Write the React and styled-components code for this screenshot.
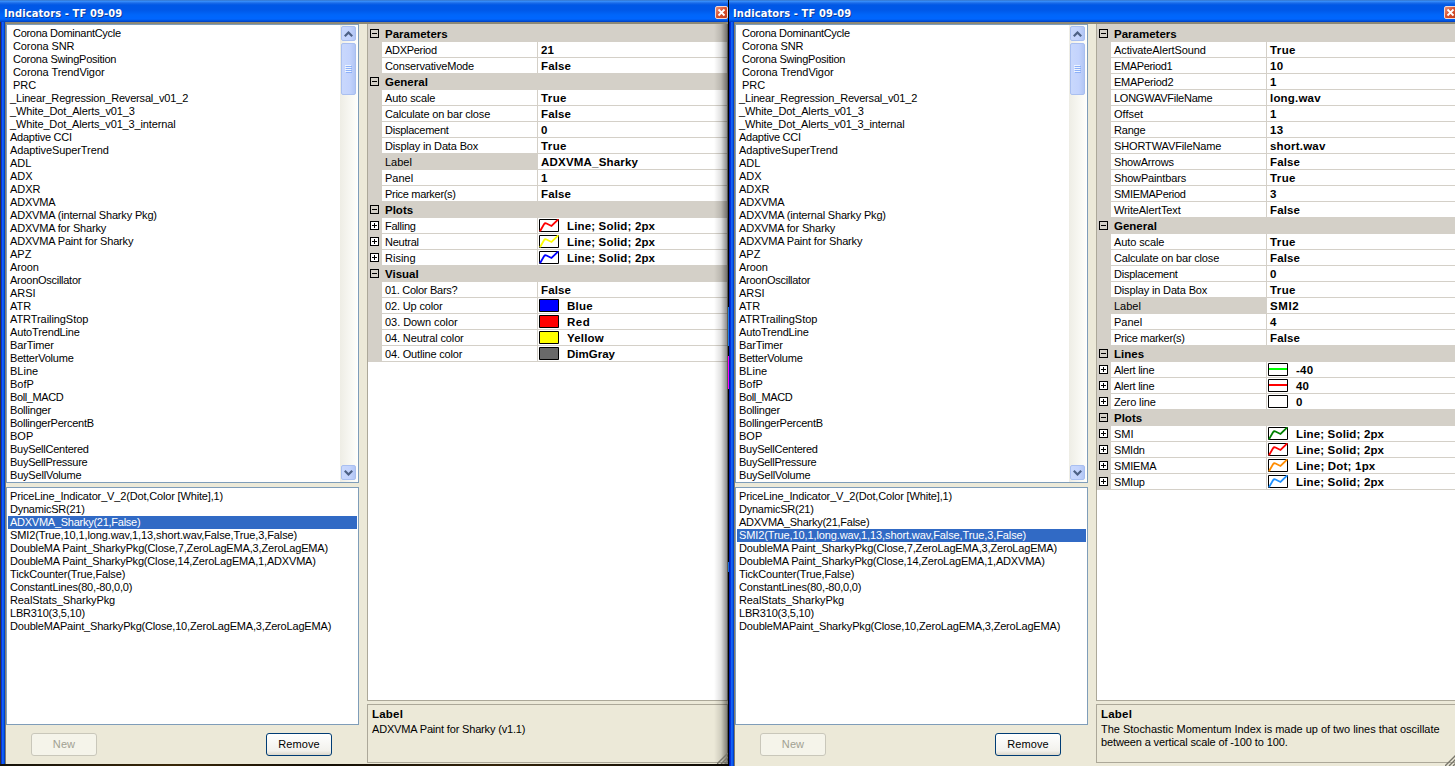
import React from 'react';
import styled, { createGlobalStyle } from 'styled-components';

const Global = createGlobalStyle`
  * { box-sizing: border-box; }
  html, body, #root { margin: 0; width: 1455px; height: 766px; overflow: hidden; }
  body { background: #0c0b08; font: 11px/13px "Liberation Sans", Arial, sans-serif; color: #000; }
`;

const Desktop = styled.div`
  display: flex;
  width: 1455px;
  height: 766px;
  background: linear-gradient(90deg, #14120a, #3a2808 12%, #120d04 22%, #33240a 34%, #0d0a05 50%, #000);
`;
const Window = styled.section`
  display: flex;
  flex-direction: column;
  flex: none;
  position: relative;
  width: ${p => p.$width}px;
  height: ${p => p.$height}px;
  overflow: hidden;
`;
const Gap = styled.div`
  width: 1px;
  height: 766px;
  flex: none;
  background: linear-gradient(#000 0 307px, #1c7fe8 307px 346px, #000 346px 356px, #ff00ff 356px 389px, #000 389px 562px, #1c6fd8 562px 572px, #000 572px);
`;
const TitleBar = styled.header`
  display: flex;
  align-items: center;
  height: 22px;
  flex: none;
  padding: 4px 0 0 4px;
  background: linear-gradient(#3168b4 0, #3d95ff 1px, #1b6be8 3px, #0058e6 5px, #0058e8 10px, #0066fa 15px, #0066ff 19px, #0050d8 21px, #003bc0 22px);
  color: #fff;
  font: bold 11px/14px "DejaVu Sans Condensed", "DejaVu Sans", sans-serif;
  text-shadow: 1px 1px 0 #0a3a9c;
  white-space: nowrap;
`;
const TitleText = styled.h1`
  margin: 0;
  padding-top: 1px;
  font: inherit;
  flex: 1;
  letter-spacing: 0.12px;
`;
const CloseButton = styled.button`
  display: flex;
  align-items: center;
  justify-content: center;
  flex: none;
  width: 13px;
  height: 13px;
  padding: 0;
  margin: -2px ${p => p.$right}px 0 0;
  border: 1px solid #f4d8d0;
  border-radius: 2px;
  background: linear-gradient(135deg, #e8907a, #d8502c 50%, #c03c1c);
`;
const Body = styled.div`
  display: flex;
  flex: 1;
  min-height: 0;
  border-top: 2px solid #8c8877;
  background: #ece9d8;
`;
const Frame = styled.div`
  flex: none;
  width: 6px;
  margin-top: -2px;
  background: linear-gradient(90deg, ${p => p.$edge} 0 1px, #0831d9 1px 2px, #1462f5 2px 3px, #0a5cf0 3px 4px, #0040c8 4px 5px, #807c6c 5px 6px);
`;
const LeftColumn = styled.div`
  display: flex;
  flex-direction: column;
  width: 353px;
  flex: none;
`;
const ListBox = styled.div`
  display: flex;
  height: ${p => p.$height}px;
  margin-bottom: ${p => p.$gap || 0}px;
  padding-right: 1px;
  border: 1px solid #7f9db9;
  background: #fff;
  flex: none;
`;
const Items = styled.ul`
  flex: 1;
  margin: 0;
  padding: 2px 0 0 1px;
  list-style: none;
`;
const Item = styled.li`
  height: 13px;
  padding-left: ${p => (p.$indent ? 5 : 2)}px;
  white-space: pre;
  background: ${p => (p.$selected ? '#316ac5' : 'transparent')};
  color: ${p => (p.$selected ? '#fff' : '#000')};
`;
const Spaced = styled.span`
  letter-spacing: ${p => p.$ls}px;
`;
const Scrollbar = styled.div`
  display: flex;
  flex-direction: column;
  width: 17px;
  flex: none;
  padding: 0 0 1px;
  background: linear-gradient(90deg, #eeede5, #fefefb);
`;
const ScrollPart = styled.div`
  display: flex;
  align-items: center;
  justify-content: center;
  width: 15px;
  height: ${p => p.$height}px;
  margin: 1px;
  border: 1px solid #a9bff0;
  border-radius: 2px;
  background: linear-gradient(90deg, #c9d8fc, #c3d3fd 60%, #b2c6f4);
`;
const Track = styled.div`
  flex: 1;
`;
const Buttons = styled.div`
  display: flex;
  justify-content: space-between;
  padding: 8px 27px 0 25px;
`;
const Button = styled.button`
  width: 66px;
  height: 23px;
  padding: 0;
  border: 1px solid ${p => (p.disabled ? '#c9c7ba' : '#003c74')};
  border-radius: 3px;
  background: ${p => (p.disabled ? '#f5f4ea' : 'linear-gradient(#fff, #f2f1ec 80%, #dcd8cc)')};
  color: ${p => (p.disabled ? '#a1a192' : '#000')};
  font: 11px/13px "Liberation Sans", sans-serif;
  letter-spacing: 0.1px;
`;
const RightColumn = styled.div`
  display: flex;
  flex-direction: column;
  flex: 1;
  min-width: 0;
  margin: 0 ${p => p.$overflow}px 0 8px;
`;
const Grid = styled.div`
  height: 677px;
  flex: none;
  padding-top: 2px;
  border: 1px solid #aca899;
  border-top: 0;
  background: linear-gradient(#d4d0c8 0 2px, #fff 2px);
`;
const Group = styled.div`
  display: grid;
  grid-template-columns: 14px 1fr;
  height: 16px;
  background: #d4d0c8;
  font-weight: bold;
  font-size: 11.5px;
  line-height: 16px;
  span { padding-left: 3px; }
`;
const Row = styled.div`
  display: grid;
  grid-template-columns: 14px 155px 1fr;
  height: 16px;
  background: #d4d0c8;
`;
const Expander = styled.svg`
  display: block;
  width: 9px;
  height: 9px;
  margin: 3px 0 0 2px;
`;
const Name = styled.div`
  height: 15px;
  padding: 2px 0 0 3px;
  background: ${p => (p.$selected ? '#d4d0c8' : '#fff')};
  white-space: nowrap;
`;
const Value = styled.div`
  display: flex;
  height: 15px;
  margin-left: 1px;
  padding: 2px 0 0 3px;
  background: #fff;
  font-weight: bold;
  font-size: 11.5px;
  white-space: nowrap;
`;
const Preview = styled.svg`
  display: block;
  width: 20px;
  height: 13px;
  flex: none;
  margin: -1px 8px 0 -2px;
`;
const Help = styled.div`
  height: 59px;
  flex: none;
  margin-top: 3px;
  padding: 3px 4px 0;
  border: 1px solid #aca899;
`;
const HelpTitle = styled.div`
  margin-bottom: 2px;
  font-weight: bold;
  font-size: 11.5px;
  letter-spacing: 0.2px;
`;
const HelpLine = styled.div`
  height: 13px;
  white-space: nowrap;
`;
const EdgeShadow = styled.div`
  position: absolute;
  right: 0;
  top: 24px;
  bottom: 0;
  width: 14px;
  background: linear-gradient(90deg, rgba(0,0,0,0), rgba(0,0,0,.12) 50%, rgba(0,0,0,.5));
`;
const Grip = styled.svg`
  position: absolute;
  right: ${p => p.$right}px;
  bottom: 0;
`;

const tracking = {
  'Corona DominantCycle': -0.3, 'Corona SNR': -0.1, 'Corona SwingPosition': -0.25, 'Corona TrendVigor': -0.07,
  _Linear_Regression_Reversal_v01_2: -0.18, _White_Dot_Alerts_v01_3: -0.13, _White_Dot_Alerts_v01_3_internal: -0.14,
  'Adaptive CCI': -0.25, AdaptiveSuperTrend: -0.1, 'ADXVMA (internal Sharky Pkg)': -0.17,
  'ADXVMA for Sharky': -0.17, 'ADXVMA Paint for Sharky': -0.17, ADXVMA: -0.15, Aroon: -0.15, AroonOscillator: -0.27,
  ATRTrailingStop: -0.07, AutoTrendLine: -0.15, BarTimer: -0.12, BetterVolume: -0.2, Boll_MACD: -0.4,
  Bollinger: -0.2, BollingerPercentB: -0.25, BuySellCentered: -0.26, BuySellPressure: -0.26, BuySellVolume: -0.2,
  'PriceLine_Indicator_V_2(Dot,Color [White],1)': -0.16, 'DynamicSR(21)': -0.23, 'ADXVMA_Sharky(21,False)': -0.26,
  'SMI2(True,10,1,long.wav,1,13,short.wav,False,True,3,False)': -0.11,
  'DoubleMA Paint_SharkyPkg(Close,7,ZeroLagEMA,3,ZeroLagEMA)': -0.17,
  'DoubleMA Paint_SharkyPkg(Close,14,ZeroLagEMA,1,ADXVMA)': -0.18, 'TickCounter(True,False)': -0.14,
  'ConstantLines(80,-80,0,0)': -0.2, RealStats_SharkyPkg: -0.1, 'LBR310(3,5,10)': -0.2,
  'DoubleMAPaint_SharkyPkg(Close,10,ZeroLagEMA,3,ZeroLagEMA)': -0.18,
  ADXPeriod: -0.3, ConservativeMode: -0.17, 'Auto scale': -0.1, 'Calculate on bar close': -0.17,
  Displacement: -0.25, 'Display in Data Box': -0.15, 'Price marker(s)': -0.3, Falling: -0.25, Neutral: -0.25,
  '01. Color Bars?': -0.27, '02. Up color': -0.15, '03. Down color': -0.05, '04. Neutral color': -0.12,
  '04. Outline color': -0.17, ActivateAlertSound: -0.1, EMAPeriod1: -0.35, EMAPeriod2: -0.25,
  LONGWAVFileName: -0.25, Range: -0.2, SHORTWAVFileName: -0.12, ShowArrows: -0.2, ShowPaintbars: -0.15,
  SMIEMAPeriod: -0.3, WriteAlertText: -0.12, 'Alert line': -0.25, 'Zero line': -0.12, SMIdn: -0.2,
  SMIEMA: -0.15, SMIup: -0.2,
  False: 0.15, True: 0.4, ADXVMA_Sharky: 0.2, 'Line; Solid; 2px': 0.16, 'Line; Dot; 1px': 0.2, Blue: 0.25,
  Red: 0.5, Yellow: 0.2, 'long.wav': 0.2, 'short.wav': 0.2, SMI2: 0.6, '-40': 0.2, 40: 0.2, 10: 0.3, 13: 0.3,
  'ADXVMA Paint for Sharky (v1.1)': -0.17,
  'The Stochastic Momentum Index is made up of two lines that oscillate': -0.02,
  'between a vertical scale of -100 to 100.': -0.12,
};
const Label = ({ children }) => <Spaced $ls={tracking[children] || 0}>{children}</Spaced>;

const indicators = ['Corona DominantCycle', 'Corona SNR', 'Corona SwingPosition', 'Corona TrendVigor', 'PRC',
  '_Linear_Regression_Reversal_v01_2', '_White_Dot_Alerts_v01_3', '_White_Dot_Alerts_v01_3_internal',
  'Adaptive CCI', 'AdaptiveSuperTrend', 'ADL', 'ADX', 'ADXR', 'ADXVMA', 'ADXVMA (internal Sharky Pkg)',
  'ADXVMA for Sharky', 'ADXVMA Paint for Sharky', 'APZ', 'Aroon', 'AroonOscillator', 'ARSI', 'ATR',
  'ATRTrailingStop', 'AutoTrendLine', 'BarTimer', 'BetterVolume', 'BLine', 'BofP', 'Boll_MACD', 'Bollinger',
  'BollingerPercentB', 'BOP', 'BuySellCentered', 'BuySellPressure', 'BuySellVolume'];

const applied = ['PriceLine_Indicator_V_2(Dot,Color [White],1)', 'DynamicSR(21)', 'ADXVMA_Sharky(21,False)',
  'SMI2(True,10,1,long.wav,1,13,short.wav,False,True,3,False)',
  'DoubleMA Paint_SharkyPkg(Close,7,ZeroLagEMA,3,ZeroLagEMA)',
  'DoubleMA Paint_SharkyPkg(Close,14,ZeroLagEMA,1,ADXVMA)', 'TickCounter(True,False)',
  'ConstantLines(80,-80,0,0)', 'RealStats_SharkyPkg', 'LBR310(3,5,10)',
  'DoubleMAPaint_SharkyPkg(Close,10,ZeroLagEMA,3,ZeroLagEMA)'];

const general = (label, panel) => ['General', [
  ['Auto scale', 'True'], ['Calculate on bar close', 'False'], ['Displacement', '0'],
  ['Display in Data Box', 'True'], ['Label', label, 'selected'], ['Panel', panel], ['Price marker(s)', 'False']]];

const adx = [
  ['Parameters', [['ADXPeriod', '21'], ['ConservativeMode', 'False']]],
  general('ADXVMA_Sharky', '1'),
  ['Plots', [['Falling', 'Line; Solid; 2px', 'plot', '#f00'], ['Neutral', 'Line; Solid; 2px', 'plot', '#ff0'],
    ['Rising', 'Line; Solid; 2px', 'plot', '#00f']]],
  ['Visual', [['01. Color Bars?', 'False'], ['02. Up color', 'Blue', 'color', '#00f'],
    ['03. Down color', 'Red', 'color', '#f00'], ['04. Neutral color', 'Yellow', 'color', '#ff0'],
    ['04. Outline color', 'DimGray', 'color', '#696969']]],
];
const smi = [
  ['Parameters', [['ActivateAlertSound', 'True'], ['EMAPeriod1', '10'], ['EMAPeriod2', '1'],
    ['LONGWAVFileName', 'long.wav'], ['Offset', '1'], ['Range', '13'], ['SHORTWAVFileName', 'short.wav'],
    ['ShowArrows', 'False'], ['ShowPaintbars', 'True'], ['SMIEMAPeriod', '3'], ['WriteAlertText', 'False']]],
  general('SMI2', '4'),
  ['Lines', [['Alert line', '-40', 'line', '#0f0'], ['Alert line', '40', 'line', '#f00'], ['Zero line', '0', 'line', '#fff']]],
  ['Plots', [['SMI', 'Line; Solid; 2px', 'plot', '#008000'], ['SMIdn', 'Line; Solid; 2px', 'plot', '#f00'],
    ['SMIEMA', 'Line; Dot; 1px', 'plot', '#ff8c00'], ['SMIup', 'Line; Solid; 2px', 'plot', '#1e90ff']]],
];

const Toggle = ({ plus }) => (
  <Expander viewBox="0 0 9 9" shapeRendering="crispEdges">
    <path d={`M.5 .5h8v8h-8zM2 4.5h5${plus ? 'M4.5 2v5' : ''}`} fill={plus ? '#fff' : 'none'} stroke="#000" />
  </Expander>
);

const Swatch = ({ kind, color }) => (
  <Preview viewBox="0 0 20 13">
    <path d="M.5 .5h19v12h-19z" fill={kind === 'color' ? color : '#fff'} stroke="#000" />
    {kind === 'line' && <path d="M1 6h18" stroke={color} strokeWidth="2" />}
    {kind === 'plot' && <path d="M1 12.3L5 5.2Q6 3.8 7.5 4.5L12.5 7L19.3 .3" stroke={color} strokeWidth="1.8" fill="none" />}
  </Preview>
);

const Arrow = ({ down }) => (
  <svg width="9" height="6" viewBox="0 0 9 6">
    <path d={down ? 'M.8 .8l3.7 3.7l3.7-3.7' : 'M.8 5.2l3.7-3.7l3.7 3.7'} fill="none" stroke="#4d6185" strokeWidth="2.2" />
  </svg>
);

function IndicatorWindow({ width, height, edge, selected, groups, help, closeRight, gripRight, overflow = 0, shadow }) {
  return (
    <Window $width={width} $height={height}>
      <TitleBar>
        <TitleText>Indicators - TF 09-09</TitleText>
        <CloseButton $right={closeRight} aria-label="Close">
          <svg width="9" height="9" viewBox="0 0 9 9"><path d="M1.5 1.5l6 6m0-6l-6 6" stroke="#fff" strokeWidth="1.8" /></svg>
        </CloseButton>
      </TitleBar>
      <Body>
        <Frame $edge={edge} />
        <LeftColumn>
          <ListBox $height={459} $gap={4}>
            <Items>
              {indicators.map((t, i) => <Item key={t} $indent={i < 5}><Label>{t}</Label></Item>)}
            </Items>
            <Scrollbar>
              <ScrollPart $height={15}><Arrow /></ScrollPart>
              <ScrollPart $height={52}>
                <svg width="7" height="8" shapeRendering="crispEdges"><path d="M0 .5h6M0 2.5h6M0 4.5h6M0 6.5h6" stroke="#eef4fe" /><path d="M1 1.5h6M1 3.5h6M1 5.5h6M1 7.5h6" stroke="#8cb0f8" /></svg>
              </ScrollPart>
              <Track />
              <ScrollPart $height={15}><Arrow down /></ScrollPart>
            </Scrollbar>
          </ListBox>
          <ListBox $height={238}>
            <Items>
              {applied.map((t, i) => <Item key={t} $selected={i === selected}><Label>{t}</Label></Item>)}
            </Items>
          </ListBox>
          <Buttons><Button disabled>New</Button><Button>Remove</Button></Buttons>
        </LeftColumn>
        <RightColumn $overflow={overflow}>
          <Grid>
            {groups.map(([title, rows]) => (
              <React.Fragment key={title}>
                <Group><Toggle /><span>{title}</span></Group>
                {rows.map(([name, value, kind, color], i) => (
                  <Row key={i}>
                    <div>{(kind === 'plot' || kind === 'line') && <Toggle plus />}</div>
                    <Name $selected={kind === 'selected'}><Label>{name}</Label></Name>
                    <Value>{color && <Swatch kind={kind} color={color} />}<Label>{value}</Label></Value>
                  </Row>
                ))}
              </React.Fragment>
            ))}
          </Grid>
          <Help>
            <HelpTitle>Label</HelpTitle>
            {help.map(t => <HelpLine key={t}><Label>{t}</Label></HelpLine>)}
          </Help>
        </RightColumn>
      </Body>
      {shadow && <EdgeShadow />}
      <Grip $right={gripRight} width="11" height="11" viewBox="0 0 11 11"><path d="M0 11L11 0M4 11L11 4M8 11L11 8" stroke="#77756a" strokeWidth="1.4" /></Grip>
    </Window>
  );
}

export default function App() {
  return (
    <>
      <Global />
      <Desktop>
        <IndicatorWindow width={728} height={764} edge="#333" selected={2} groups={adx}
          help={['ADXVMA Paint for Sharky (v1.1)']} closeRight={0} gripRight={0} shadow />
        <Gap />
        <IndicatorWindow width={726} height={766} edge="#0020b0" selected={3} groups={smi} overflow={-2}
          help={['The Stochastic Momentum Index is made up of two lines that oscillate', 'between a vertical scale of -100 to 100.']}
          closeRight={-2} gripRight={-1} />
      </Desktop>
    </>
  );
}
